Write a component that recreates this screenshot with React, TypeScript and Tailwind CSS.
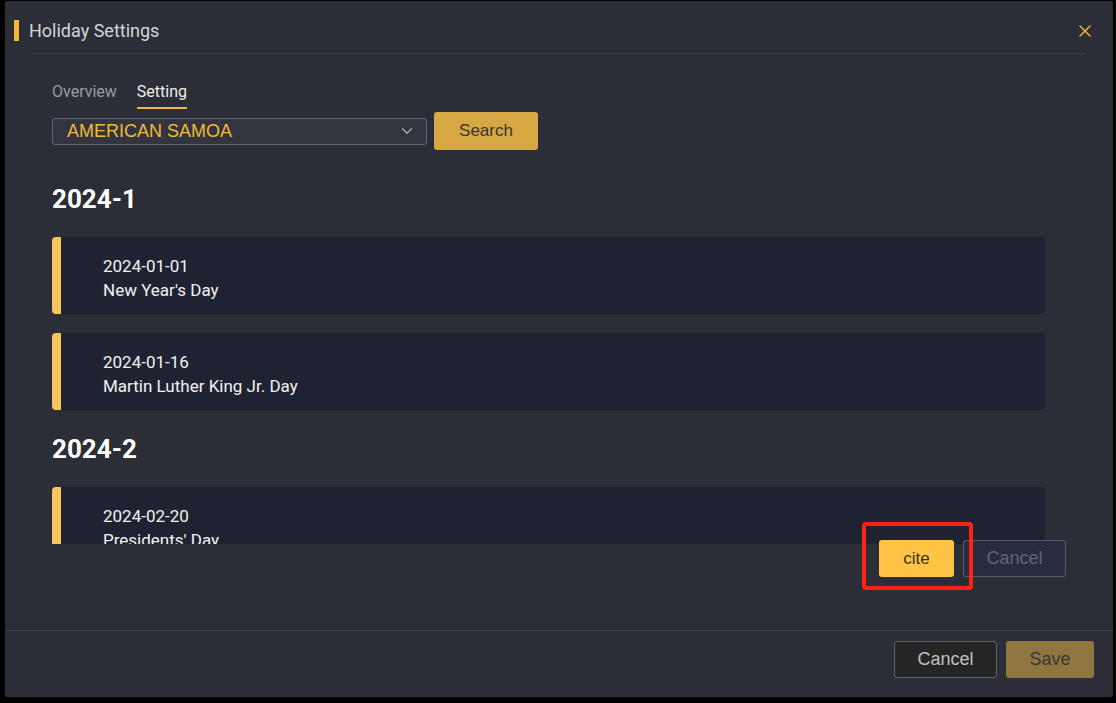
import { ChevronDown } from "lucide-react";

type Holiday = { date: string; name: string };
type Group = { month: string; items: Holiday[] };

const GROUPS: Group[] = [
  {
    month: "2024-1",
    items: [
      { date: "2024-01-01", name: "New Year's Day" },
      { date: "2024-01-16", name: "Martin Luther King Jr. Day" },
    ],
  },
  {
    month: "2024-2",
    items: [
      { date: "2024-02-20", name: "Presidents' Day" },
      { date: "2024-02-29", name: "Leap Day" },
    ],
  },
];

const roboto = "font-['Roboto','Liberation_Sans',sans-serif]";
const arial = "font-['Liberation_Sans',Arial,sans-serif]";

function HolidayCard({ h }: { h: Holiday }) {
  return (
    <div className={`mb-[19px] flex h-[77px] shrink-0 overflow-hidden rounded-[4px] bg-[#1f2331] ${roboto}`}>
      <div className="w-[9px] shrink-0 bg-[#f6c55b]" />
      <div className="pl-[42px] pt-[17px] text-[17px] leading-[24px] text-[#f2f2f2]">
        <div>{h.date}</div>
        <div>{h.name}</div>
      </div>
    </div>
  );
}

export default function App() {
  return (
    <div className="h-[703px] w-[1116px] overflow-hidden bg-black pl-[5px] pt-[1px]">
      <div className="relative flex h-[696px] w-[1108px] flex-col rounded-[2px] bg-[#2b2e36]">
        {/* header */}
        <div className="flex h-[52px] items-center pb-[8px] pl-[9px] pr-[22px] pt-[15px]">
          <span className="h-[21px] w-[5px] bg-[#f7b731]" />
          <span className={`ml-[10px] text-[18px] leading-[21px] text-[#d4d5d8] ${roboto}`}>Holiday Settings</span>
          <button className="ml-auto flex h-[21px] w-[13px] items-center justify-center">
            <svg viewBox="0 0 12 12" className="h-[12px] w-[12px]" fill="none">
              <path d="M1 1l10 10M11 1L1 11" stroke="#f2b134" strokeWidth="1.5" strokeLinecap="round" />
            </svg>
          </button>
        </div>
        <div className="mx-[27px] h-px bg-[#3b3f52]" />

        {/* tabs */}
        <div className={`ml-[47px] mt-[28px] flex gap-[20px] text-[16px] leading-[20px] ${roboto}`}>
          <span className="text-[#9a9ca4]">Overview</span>
          <span className="flex flex-col text-[#ececec]">
            Setting
            <span className="mt-[5px] h-[2px] bg-[#f7b731]" />
          </span>
        </div>

        {/* country picker */}
        <div className={`ml-[47px] mt-[3px] flex items-center gap-[7px] ${arial}`}>
          <div className="flex h-[27px] w-[375px] items-center rounded-[3px] border border-[#5d6675] bg-[#32353e] pl-[14px] pr-[10px]">
            <span className="text-[18px] text-[#f2b934]">AMERICAN SAMOA</span>
            <ChevronDown className="ml-auto h-[18px] w-[18px] text-[#a9adb5]" strokeWidth={1.6} />
          </div>
          <button className="h-[38px] w-[104px] rounded-[3px] bg-[#d5a842] text-[17px] text-[#363636]">Search</button>
        </div>

        {/* holiday list */}
        <div className="ml-[47px] mt-[10px] flex h-[384px] w-[993px] flex-col overflow-hidden">
          {GROUPS.map((g, i) => (
            <div key={g.month} className="flex shrink-0 flex-col">
              <h2 className={`mb-[20px] text-[26px] font-bold leading-[36px] text-white ${roboto} ${i === 0 ? "mt-[21px]" : "mt-[2px]"}`}>{g.month}</h2>
              {g.items.map((h) => (
                <HolidayCard key={h.date} h={h} />
              ))}
            </div>
          ))}
        </div>

        {/* cite / cancel */}
        <div className={`-mt-[4px] flex justify-end gap-[9px] pr-[47px] ${arial}`}>
          <div className="relative">
            <button className="h-[37px] w-[75px] rounded-[3px] bg-[#ffc443] text-[17px] text-[#333]">cite</button>
            <span className="pointer-events-none absolute -bottom-[13px] -left-[17px] -right-[19px] -top-[18px] rounded-[4px] border-[4px] border-[#ff2016]" />
          </div>
          <button className="h-[37px] w-[103px] rounded-[3px] border border-[#5a5f70] bg-[#282c40] text-[18px] text-[#62666f]">Cancel</button>
        </div>

        {/* footer */}
        <div className="mt-auto border-t border-[#3a3f52]">
          <div className={`flex justify-end gap-[9px] pb-[19px] pr-[19px] pt-[10px] ${arial}`}>
            <button className="h-[37px] w-[103px] rounded-[3px] border border-[#62656d] bg-[#252525] text-[18px] text-[#c0c0c0]">Cancel</button>
            <button className="h-[37px] w-[88px] rounded-[3px] bg-[#8f7640] text-[18px] text-[#383734]">Save</button>
          </div>
        </div>
      </div>
    </div>
  );
}
